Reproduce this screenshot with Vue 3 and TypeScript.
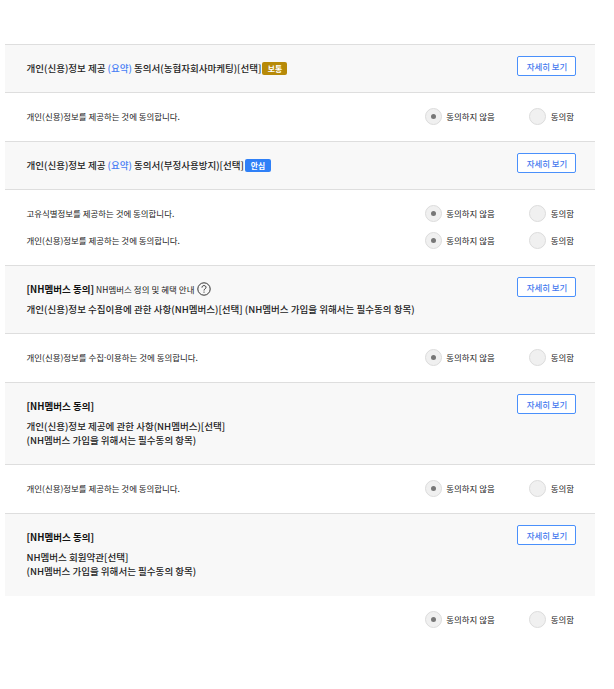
<script setup lang="ts">
import { reactive } from 'vue'

type Choice = 'no' | 'yes'

interface Item {
  label: string[]
  choice: Choice
}

interface Section {
  id: string
  height: number
  bodyHeight: number
  group?: string
  guide?: string
  summary?: { before: string; mark: string; after: string }
  badge?: { text: string; tone: 'normal' | 'safe' }
  lines?: string[]
  items: Item[]
}

// Label parts are joined by a tightly set middle dot.
const sections = reactive<Section[]>([
  {
    id: 'marketing',
    height: 49,
    bodyHeight: 48,
    summary: { before: '개인(신용)정보 제공 ', mark: '(요약)', after: ' 동의서(농협자회사마케팅)[선택]' },
    badge: { text: '보통', tone: 'normal' },
    items: [{ label: ['개인(신용)정보를 제공하는 것에 동의합니다.'], choice: 'no' }],
  },
  {
    id: 'fraud',
    height: 49,
    bodyHeight: 75,
    summary: { before: '개인(신용)정보 제공 ', mark: '(요약)', after: ' 동의서(부정사용방지)[선택]' },
    badge: { text: '안심', tone: 'safe' },
    items: [
      { label: ['고유식별정보를 제공하는 것에 동의합니다.'], choice: 'no' },
      { label: ['개인(신용)정보를 제공하는 것에 동의합니다.'], choice: 'no' },
    ],
  },
  {
    id: 'collect',
    height: 69,
    bodyHeight: 48,
    group: '[NH멤버스 동의]',
    guide: 'NH멤버스 정의 및 혜택 안내',
    lines: ['개인(신용)정보 수집이용에 관한 사항(NH멤버스)[선택] (NH멤버스 가입을 위해서는 필수동의 항목)'],
    items: [{ label: ['개인(신용)정보를 수집', '이용하는 것에 동의합니다.'], choice: 'no' }],
  },
  {
    id: 'provide',
    height: 83,
    bodyHeight: 48,
    group: '[NH멤버스 동의]',
    lines: ['개인(신용)정보 제공에 관한 사항(NH멤버스)[선택]', '(NH멤버스 가입을 위해서는 필수동의 항목)'],
    items: [{ label: ['개인(신용)정보를 제공하는 것에 동의합니다.'], choice: 'no' }],
  },
  {
    id: 'terms',
    height: 83,
    bodyHeight: 48,
    group: '[NH멤버스 동의]',
    lines: ['NH멤버스 회원약관[선택]', '(NH멤버스 가입을 위해서는 필수동의 항목)'],
    items: [{ label: [], choice: 'no' }],
  },
])

const options: { value: Choice; text: string }[] = [
  { value: 'no', text: '동의하지 않음' },
  { value: 'yes', text: '동의함' },
]
</script>

<template>
  <main class="consent">
    <section v-for="(s, i) in sections" :key="s.id">
      <header class="head" :class="{ last: i === sections.length - 1 }" :style="{ height: s.height + 'px' }">
        <div class="titles">
          <h2 v-if="s.summary" class="summary">
            <span>{{ s.summary.before }}<em>{{ s.summary.mark }}</em>{{ s.summary.after }}</span>
            <span v-if="s.badge" class="badge" :class="s.badge.tone">{{ s.badge.text }}</span>
          </h2>
          <template v-else>
            <div class="group">
              <strong>{{ s.group }}</strong>
              <span v-if="s.guide" class="guide">{{ s.guide }}</span>
              <svg v-if="s.guide" class="help" viewBox="0 0 14 14" aria-hidden="true">
                <circle cx="7" cy="7" r="6.2" />
                <path d="M5 5.6C5 4.3 5.8 3.6 7 3.6s2 .7 2 1.8c0 1.5-2 1.4-2 3.1" />
                <path d="M7 9.6v1.1" />
              </svg>
            </div>
            <p v-for="line in s.lines" :key="line" class="line">{{ line }}</p>
          </template>
        </div>
        <button type="button" class="detail">자세히 보기</button>
      </header>
      <div class="body" :style="{ height: s.bodyHeight + 'px' }">
        <div v-for="(item, n) in s.items" :key="n" class="item">
          <p class="label">
            <template v-for="(part, k) in item.label" :key="k"><span v-if="k > 0" class="dot">·</span>{{ part }}</template>
          </p>
          <div class="options">
            <label v-for="o in options" :key="o.value" class="option" @click="item.choice = o.value">
              <span class="radio" :class="{ on: item.choice === o.value }"></span>{{ o.text }}
            </label>
          </div>
        </div>
      </div>
    </section>
  </main>
</template>

<style>
body {
  background: #fff;
}
</style>

<style scoped>
.consent {
  box-sizing: border-box;
  width: 590px;
  margin-left: 5px;
  padding-top: 44px;
  font-family: 'Noto Sans CJK KR', sans-serif;
  font-size: 8.45px;
  color: #222;
  white-space: nowrap;
}
h2,
p {
  margin: 0;
}
.head {
  box-sizing: border-box;
  display: flex;
  justify-content: space-between;
  align-items: flex-start;
  padding: 11px 19px 0 21.5px;
  border-top: 1px solid #dedede;
  border-bottom: 1px solid #dedede;
  background: #f8f8f8;
}
.head.last {
  border-bottom: 0;
}
.titles {
  padding-top: 4px;
}
.summary {
  display: flex;
  align-items: center;
  gap: 1px;
  font-size: 9.52px;
  line-height: 16px;
  font-weight: 500;
  color: #222;
}
.summary em {
  font-style: normal;
  color: #4880f5;
}
.badge {
  height: 13px;
  width: 25px;
  border-radius: 2px;
  font-size: 7.8px;
  font-weight: 700;
  line-height: 13px;
  text-align: center;
  color: #fff;
}
.badge.normal {
  background: #b78a08;
}
.badge.safe {
  width: 26px;
  background: #2f80f7;
}
.group {
  display: flex;
  align-items: center;
  height: 16px;
  margin-bottom: 4.5px;
}
.group strong {
  font-size: 9.54px;
  font-weight: 700;
  color: #111;
}
.guide {
  margin-left: 2px;
  letter-spacing: 0.06px;
}
.help {
  width: 14px;
  height: 14px;
  margin-left: 2.5px;
  fill: none;
  stroke: #333;
  stroke-width: 1;
}
.line {
  font-size: 9.54px;
  line-height: 14.5px;
  font-weight: 500;
  color: #222;
}
.dot {
  margin: 0 -1.2px;
}
.detail {
  box-sizing: border-box;
  width: 59px;
  height: 20px;
  padding: 0 0 0 1px;
  border: 1px solid #4a90fb;
  border-radius: 2px;
  background: #fff;
  font-family: inherit;
  font-size: 8.45px;
  font-weight: 500;
  line-height: 18px;
  color: #4478ee;
}
.body {
  box-sizing: border-box;
  display: flex;
  flex-direction: column;
  justify-content: center;
  gap: 9px;
  padding: 0 21px 2px 21.5px;
}
.item {
  display: flex;
  justify-content: space-between;
  align-items: center;
  height: 18px;
}
.options {
  display: flex;
  gap: 34.5px;
}
.option {
  display: flex;
  align-items: center;
  gap: 4.5px;
}
.radio {
  box-sizing: border-box;
  display: grid;
  place-items: center;
  width: 17px;
  height: 17px;
  border: 1px solid #dcdcdc;
  border-radius: 50%;
  background: #f0f0f0;
}
.radio.on::after {
  content: '';
  width: 5px;
  height: 5px;
  border-radius: 50%;
  background: #777;
}
</style>
